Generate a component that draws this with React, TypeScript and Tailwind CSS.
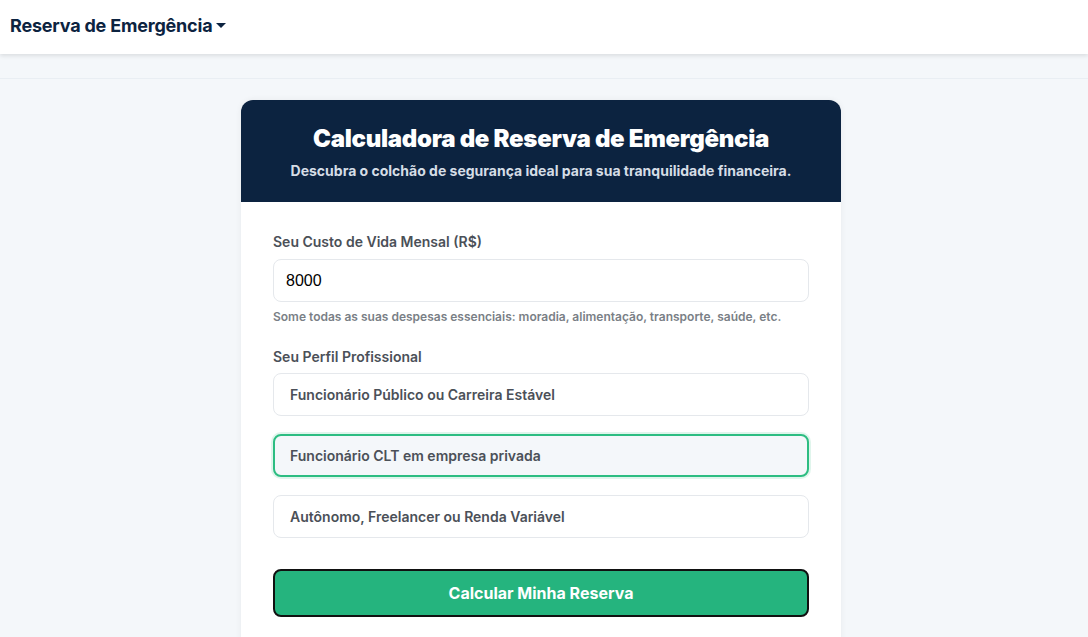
import React from "react";

export default function App() {
  const options = [
    { label: "Funcionário Público ou Carreira Estável", selected: false },
    { label: "Funcionário CLT em empresa privada", selected: true },
    { label: "Autônomo, Freelancer ou Renda Variável", selected: false },
  ];
  return (
    <div
      className="min-h-[637px] bg-[#f4f7fa]"
      style={{ fontFamily: "Inter, 'Noto Sans', sans-serif" }}
    >
      <header className="h-[54px] bg-white shadow-[0_2px_4px_rgba(0,0,0,0.1)] flex items-center px-[10px] pb-[4px] relative z-10">
        <span className="text-[18px] font-bold text-[#0c2340] tracking-[-0.2px]">
          Reserva de Emergência
        </span>
        <svg width="10" height="6" viewBox="0 0 10 6" className="ml-[4px] mt-[1px]">
          <path d="M0 0 L10 0 L5 5 Z" fill="#0c2340" />
        </svg>
      </header>
      <div className="h-[25px] border-b border-[#e9eef3]" />
      <main className="flex justify-center pt-[21px] pr-[6px]">
        <div className="w-[600px] rounded-t-[12px] bg-white shadow-[0_0_6px_rgba(0,0,0,0.06)] overflow-hidden">
          <div className="bg-[#0c2340] h-[102px] flex flex-col items-center pt-[23px]">
            <h1 className="text-[24px] font-black text-white tracking-[-0.3px] leading-[32px]">
              Calculadora de Reserva de Emergência
            </h1>
            <p className="text-[14px] font-bold text-[#d5dde6] mt-[6px] leading-[20px]">
              Descubra o colchão de segurança ideal para sua tranquilidade financeira.
            </p>
          </div>
          <div className="px-[32px] pt-[30px] pb-[40px]">
            <label className="block text-[14px] font-semibold text-[#4b5058] leading-[20px]">
              Seu Custo de Vida Mensal (R$)
            </label>
            <div className="mt-[7px] h-[43px] rounded-[8px] border border-[#e5e8ec] flex items-center px-[12px]">
              <span
                className="text-[16px] text-black"
                style={{ fontFamily: "'Liberation Sans', Arial, sans-serif" }}
              >
                8000
              </span>
            </div>
            <p className="mt-[6px] text-[12px] font-semibold text-[#7a7f86] leading-[18px]">
              Some todas as suas despesas essenciais: moradia, alimentação, transporte, saúde, etc.
            </p>
            <label className="block mt-[21px] text-[14px] font-semibold text-[#4b5058] leading-[20px]">
              Seu Perfil Profissional
            </label>
            <div className="mt-[6px] flex flex-col gap-[18px]">
              {options.map((o) => (
                <div
                  key={o.label}
                  className={
                    o.selected
                      ? "h-[43px] rounded-[8px] border-2 border-[#2dbd82] bg-[#f4f7fa] shadow-[0_0_0_2px_rgba(45,189,130,0.15)] flex items-center pl-[15px]"
                      : "h-[43px] rounded-[8px] border border-[#e5e8ec] bg-white flex items-center pl-[16px]"
                  }
                >
                  <span className="text-[14px] font-semibold text-[#4b5058]">{o.label}</span>
                </div>
              ))}
            </div>
            <button className="mt-[31px] w-full h-[48px] rounded-[8px] border-2 border-[#111] bg-[#25b47e] text-white text-[16px] font-bold">
              Calcular Minha Reserva
            </button>
          </div>
        </div>
      </main>
    </div>
  );
}
